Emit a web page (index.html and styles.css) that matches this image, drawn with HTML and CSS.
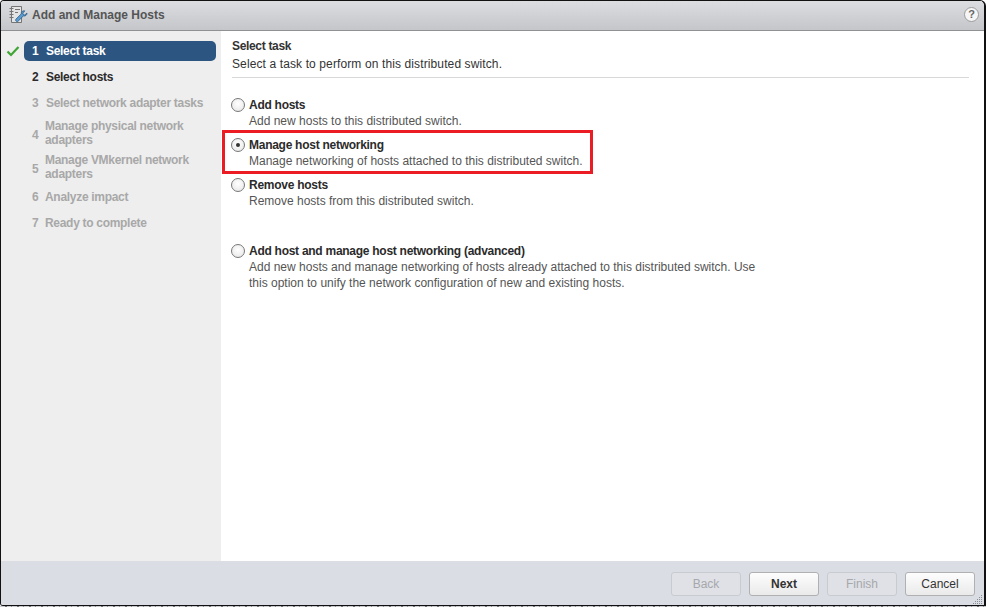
FILE: index.html
```html
<!DOCTYPE html>
<html lang="en">
<head>
<meta charset="utf-8">
<title>Add and Manage Hosts</title>
<link rel="stylesheet" href="styles.css">
</head>
<body>
<div class="window">
  <header class="titlebar">
    <svg class="title-icon" width="19" height="19" viewBox="0 0 19 19">
      <path d="M2.500 1.500h10v16h-10z" fill="#e4e4e4" stroke="#757575"/>
      <path d="M.5 3.500h4M.5 6.500h4M.5 9.500h4M.5 12.500h4M6 4.500h5M6 7.500h3" stroke="#757575" fill="none"/>
      <path transform="translate(.5 1.500)" d="M17.500 6.500l-2.200 2-1.600-.4-.4-1.600 2-2.100c-2-.5-3.900 1-3.600 3l-5.200 5.200c-1.300 1.400.8 3.400 2.100 2.100l5.200-5.200c2.100.4 3.900-1.100 3.700-3z" fill="#5a9bd0" stroke="#2b5f8a" stroke-width=".8"/>
    </svg>
    <span class="title-text">Add and Manage Hosts</span>
    <span class="help">?</span>
  </header>
  <div class="middle">
    <nav class="steps">
      <div class="step step-current">
        <svg class="check" width="14" height="12" viewBox="0 0 14 12"><path d="M1.500 6.500l3.500 3.500 7.500-8" fill="none" stroke="#3fa535" stroke-width="2.200"/></svg>
        <div class="step-pill"><span class="num">1</span><span>Select task</span></div>
      </div>
      <div class="step step-next"><span class="num">2</span><span>Select hosts</span></div>
      <div class="step step-off step-wide-num"><span class="num">3</span><span>Select network adapter tasks</span></div>
      <div class="step step-off step-double"><span class="num">4</span><span>Manage physical network adapters</span></div>
      <div class="step step-off step-double"><span class="num">5</span><span>Manage VMkernel network adapters</span></div>
      <div class="step step-off"><span class="num">6</span><span>Analyze impact</span></div>
      <div class="step step-off"><span class="num">7</span><span>Ready to complete</span></div>
    </nav>
    <main class="content">
      <div class="content-head">
        <div class="head-title">Select task</div>
        <div class="head-sub">Select a task to perform on this distributed switch.</div>
      </div>
      <div class="options">
        <div class="option">
          <span class="radio"></span>
          <div><div class="opt-title">Add hosts</div><div class="opt-desc">Add new hosts to this distributed switch.</div></div>
        </div>
        <div class="option option-selected">
          <span class="radio radio-on"></span>
          <div><div class="opt-title">Manage host networking</div><div class="opt-desc">Manage networking of hosts attached to this distributed switch.</div></div>
        </div>
        <div class="option">
          <span class="radio"></span>
          <div><div class="opt-title">Remove hosts</div><div class="opt-desc">Remove hosts from this distributed switch.</div></div>
        </div>
        <div class="option option-far">
          <span class="radio"></span>
          <div><div class="opt-title">Add host and manage host networking (advanced)</div><div class="opt-desc opt-wide">Add new hosts and manage networking of hosts already attached to this distributed switch. Use this option to unify the network configuration of new and existing hosts.</div></div>
        </div>
      </div>
    </main>
  </div>
  <footer class="footer">
    <button class="btn" disabled>Back</button>
    <button class="btn btn-primary">Next</button>
    <button class="btn" disabled>Finish</button>
    <button class="btn">Cancel</button>
    <svg class="grip" width="11" height="11" viewBox="0 0 11 11">
      <path d="M9 1h1M7 3h1M9 3h1M5 5h1M7 5h1M9 5h1M3 7h1M5 7h1M7 7h1M9 7h1M1 9h1M3 9h1M5 9h1M7 9h1M9 9h1" stroke="#8a8d92" stroke-width="1" fill="none" transform="translate(0 .5)"/>
    </svg>
  </footer>
</div>
<div class="backdrop-strip"></div>
</body>
</html>
```
FILE: styles.css
```css
* { box-sizing: border-box; }
html, body { margin: 0; padding: 0; background: #fff; }
body { width: 986px; height: 607px; overflow: hidden; font-family: "Liberation Sans", Arial, sans-serif; font-size: 12px; }
.window {
  width: 986px; height: 606px; display: flex; flex-direction: column;
  border: 1px solid #111; border-right-width: 2px; border-top-right-radius: 6px; border-top-left-radius: 4px; border-bottom-left-radius: 3px; overflow: hidden; background: #fff;
}
.titlebar {
  height: 30px; flex: none; display: flex; align-items: center; padding: 0 5px 2px 8px;
  background: linear-gradient(#dcdde0, #c4c6ca); border-bottom: 1px solid #8f9194;
}
.title-icon { margin-right: 4px; }
.title-text { font-weight: bold; color: #555; flex: 1; }
.help {
  width: 15px; height: 15px; border-radius: 50%; background: #f6f6f6; border: 1px solid #9a9a9a;
  color: #666; font-weight: bold; font-size: 11px; line-height: 13px; text-align: center;
}
.middle { flex: 1; display: flex; min-height: 0; }
.steps { width: 220px; flex: none; background: #eeeeee; padding-top: 10px; }
.step { display: flex; padding-left: 31px; padding-right: 10px; line-height: 14px; min-height: 26px; padding-top: 6px; font-weight: bold; letter-spacing: -.3px; }
.step .num { width: 14px; flex: none; }
.step-off .num { width: 13px; }
.step-wide-num .num { width: 14px; }
.step-current { padding: 0 5px 0 5px; align-items: center; height: 20px; min-height: 20px; margin-bottom: 3px; }
.check { flex: none; margin-right: 4px; }
.step-pill {
  flex: 1; height: 20px; display: flex; align-items: center; padding-left: 8px;
  background: #2c5581; color: #fff; border-radius: 5px;
}
.step-next { color: #2b2b2b; }
.step-off { color: #a8a8a8; }
.step-double { min-height: 34px; padding-top: 3px; }
.step-double .num { align-self: center; }
.content { flex: 1; min-width: 0; padding: 7px 15px 0 11px; }
.content-head { height: 40px; border-bottom: 1px solid #d8d8d8; line-height: 17px; }
.head-title { font-weight: bold; color: #333; letter-spacing: -.33px; }
.head-sub { color: #333; letter-spacing: .115px; line-height: 18px; }
.options { padding-top: 19px; }
.option { display: flex; gap: 4px; height: 40px; margin-left: -1px; position: relative; }
.option-selected::after {
  content: ""; box-sizing: border-box; position: absolute; left: -9px; top: -7px; width: 371px; height: 44px;
  border: 3px solid #ec1c24; pointer-events: none;
}
.option-far { margin-top: 26px; height: auto; }
.radio {
  width: 14px; height: 14px; flex: none; border-radius: 50%; border: 1px solid #777;
  background: radial-gradient(circle at 50% 40%, #fff, #e4e4e4); margin-top: 1px;
  display: flex; align-items: center; justify-content: center;
}
.radio-on::after { content: ""; width: 4px; height: 4px; border-radius: 50%; background: #333; }
.opt-title { font-weight: bold; color: #2b2b2b; line-height: 16px; letter-spacing: -.27px; }
.opt-desc { color: #555; line-height: 16px; }
.opt-wide { width: 520px; }
.footer {
  height: 44px; flex: none; display: flex; justify-content: flex-end; gap: 8px; padding: 11px 9px 0 0;
  background: #dadde4; position: relative;
}
.btn {
  width: 70px; height: 24px; padding: 0; border: 1px solid #b0b0b0; border-radius: 3px;
  background: linear-gradient(#fdfdfd, #eaeaea); font: 12px "Liberation Sans", Arial, sans-serif; color: #333;
}
.btn-primary { font-weight: bold; }
.btn:disabled { background: #dfe1e6; border-color: #c8cbd0; color: #a6a8ac; }
.grip { position: absolute; right: 1px; bottom: 0; }
.backdrop-strip {
  height: 1px;
  background: repeating-linear-gradient(90deg, #c9cbce 0 5px, #6f7174 5px 7px, #c9cbce 7px 11px, #8d8f92 11px 12px);
}
```
